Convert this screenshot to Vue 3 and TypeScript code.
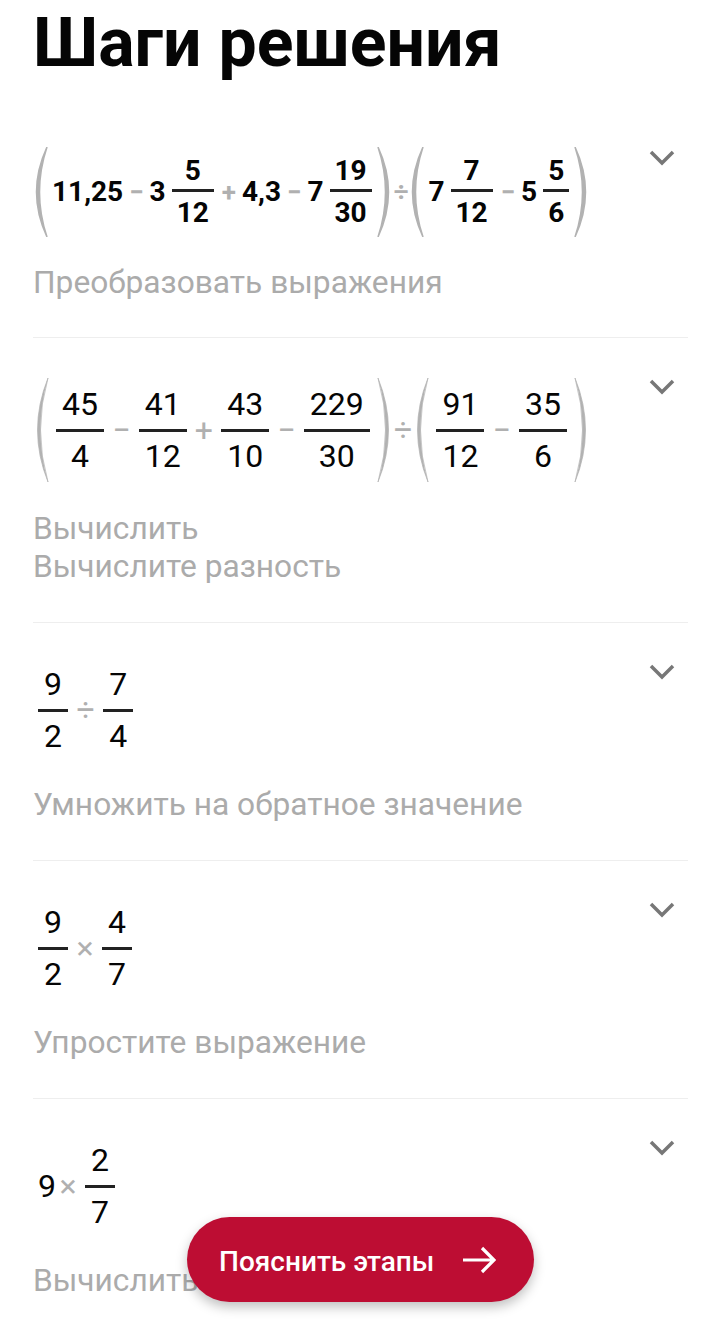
<script setup lang="ts">
type Token =
  | { kind: 'num'; text: string }
  | { kind: 'op'; text: string }
  | { kind: 'frac'; top: string; bottom: string }
  | { kind: 'open' }
  | { kind: 'close' };

interface Step {
  tokens: Token[];
  captions: string[];
  variant: 'bold' | 'tall' | 'plain';
}

const n = (text: string): Token => ({ kind: 'num', text });
const op = (text: string): Token => ({ kind: 'op', text });
const f = (top: string, bottom: string): Token => ({ kind: 'frac', top, bottom });
const open: Token = { kind: 'open' };
const close: Token = { kind: 'close' };

const steps: Step[] = [
  {
    variant: 'bold',
    tokens: [
      open, n('11,25'), op('−'), n('3'), f('5', '12'), op('+'), n('4,3'), op('−'), n('7'), f('19', '30'), close,
      op('÷'),
      open, n('7'), f('7', '12'), op('−'), n('5'), f('5', '6'), close,
    ],
    captions: ['Преобразовать выражения'],
  },
  {
    variant: 'tall',
    tokens: [
      open, f('45', '4'), op('−'), f('41', '12'), op('+'), f('43', '10'), op('−'), f('229', '30'), close,
      op('÷'),
      open, f('91', '12'), op('−'), f('35', '6'), close,
    ],
    captions: ['Вычислить', 'Вычислите разность'],
  },
  {
    variant: 'plain',
    tokens: [f('9', '2'), op('÷'), f('7', '4')],
    captions: ['Умножить на обратное значение'],
  },
  {
    variant: 'plain',
    tokens: [f('9', '2'), op('×'), f('4', '7')],
    captions: ['Упростите выражение'],
  },
  {
    variant: 'plain',
    tokens: [n('9'), op('×'), f('2', '7')],
    captions: ['Вычислить'],
  },
];

// the ÷ between two bracket groups sits a bit further out than other operators
function isSeparator(t: Token, hasParens: boolean) {
  return hasParens && t.kind === 'op' && t.text === '÷';
}
</script>

<template>
  <div class="page">
    <h1 class="title">Шаги решения</h1>

    <section v-for="(step, i) in steps" :key="i" class="step" :class="step.variant">
      <div class="body">
        <div class="math">
          <template v-for="(t, j) in step.tokens" :key="j">
            <svg v-if="t.kind === 'open'" class="paren" viewBox="0 0 14 100" preserveAspectRatio="none">
              <path d="M12 0 Q-9 50 12 100 Q-3 50 12 0 Z" />
            </svg>
            <svg v-else-if="t.kind === 'close'" class="paren" viewBox="0 0 14 100" preserveAspectRatio="none">
              <path d="M2 0 Q23 50 2 100 Q17 50 2 0 Z" />
            </svg>
            <span v-else-if="t.kind === 'num'" class="num">{{ t.text }}</span>
            <span
              v-else-if="t.kind === 'op'"
              class="op"
              :class="{ sep: isSeparator(t, step.variant !== 'plain') }"
            >{{ t.text }}</span>
            <span v-else class="frac">
              <span class="top">{{ t.top }}</span>
              <span class="bottom">{{ t.bottom }}</span>
            </span>
          </template>
        </div>
        <p v-for="c in step.captions" :key="c" class="caption">{{ c }}</p>
      </div>
      <svg class="chevron" viewBox="0 0 26 16">
        <polyline points="2,2 13,13 24,2" />
      </svg>
    </section>

    <button class="explain">
      <span class="explain-label">Пояснить этапы</span>
      <svg class="arrow" viewBox="0 0 34 28">
        <path d="M1 14 H32 M20 2 L32 14 L20 26" />
      </svg>
    </button>
  </div>
</template>

<style scoped>
.page {
  position: relative;
  height: 1319px;
  overflow: hidden;
  background: #fff;
  font-family: Roboto, "Liberation Sans", sans-serif;
}

.title {
  margin: 0;
  height: 109px;
  padding-left: 33px;
  font-size: 68px;
  font-weight: 700;
  line-height: 86px;
  color: #050505;
}

.step {
  display: flex;
  align-items: flex-start;
  margin: 0 21px 0 33px;
  padding: 40px 0 36px;
  border-bottom: 1px solid #eee;
}
.step:first-of-type { padding-top: 38px; padding-bottom: 35px; }
.step:last-child { border-bottom: none; }

.body { flex: 1; min-width: 0; }

.chevron {
  flex-shrink: 0;
  width: 26px;
  height: 16px;
  margin: 1px 13px 0 0;
  fill: none;
  stroke: #777;
  stroke-width: 3.5;
}
.step.bold .chevron { margin-top: 3px; }

.math {
  display: flex;
  align-items: center;
  height: 94px;
  color: #050505;
  font-size: 32px;
  line-height: 1;
}
.step.bold .math { height: 90px; padding-left: 2px; font-size: 28px; font-weight: 700; margin-bottom: 27px; }
.step.tall .math { height: 104px; padding-left: 3px; margin-bottom: 28px; }
.step.plain .math { margin-bottom: 29px; }

.paren {
  flex-shrink: 0;
  width: 14px;
  height: 100%;
  fill: #b2b2b2;
  stroke: #b2b2b2;
  stroke-width: 0.7;
}
.step.bold .paren { stroke-width: 1.5; }

.num { padding: 0 2px 0 3px; }
.step.plain .num { padding: 0 0 0 5px; }

.op {
  padding: 0 2.2px;
  color: #b0b0b0;
  font-size: 32px;
}
.step.bold .op { padding: 0 3px 0 4px; font-size: 26px; }
.step.plain .op { padding: 0 3.5px; }
.op.sep { margin: 0 2px; }
.step.bold .op.sep { margin: 0; }

.frac {
  display: inline-flex;
  flex-direction: column;
  align-items: stretch;
  padding: 0 6px;
  text-align: center;
}
.step.bold .frac { padding: 0 4px; }
.step.plain .frac { padding: 0 5px; }
.frac .top {
  padding: 0 6px 9px;
  border-bottom: 3px solid #222;
}
.frac .bottom { padding: 8px 6px 0; }
.step.bold .frac .top { padding: 0 5px 4px; }
.step.bold .frac .bottom { padding: 7px 5px 0; }

.caption {
  margin: 0;
  font-size: 31.7px;
  line-height: 38px;
  color: #ababab;
}

.explain {
  position: absolute;
  left: 187px;
  top: 1217px;
  display: flex;
  align-items: center;
  justify-content: space-between;
  width: 347px;
  height: 85px;
  padding: 0 38px 0 32px;
  border: none;
  border-radius: 43px;
  background: #bd0d33;
  box-shadow: 0 5px 12px rgba(0, 0, 0, 0.25);
  color: #fff;
  font-family: inherit;
  font-size: 28px;
  font-weight: 500;
}
.explain-label { padding-top: 3px; }
.arrow {
  width: 34px;
  height: 28px;
  fill: none;
  stroke: #fff;
  stroke-width: 3.2;
}
</style>

<style>
html, body { margin: 0; background: #fff; overflow: hidden; }
</style>
